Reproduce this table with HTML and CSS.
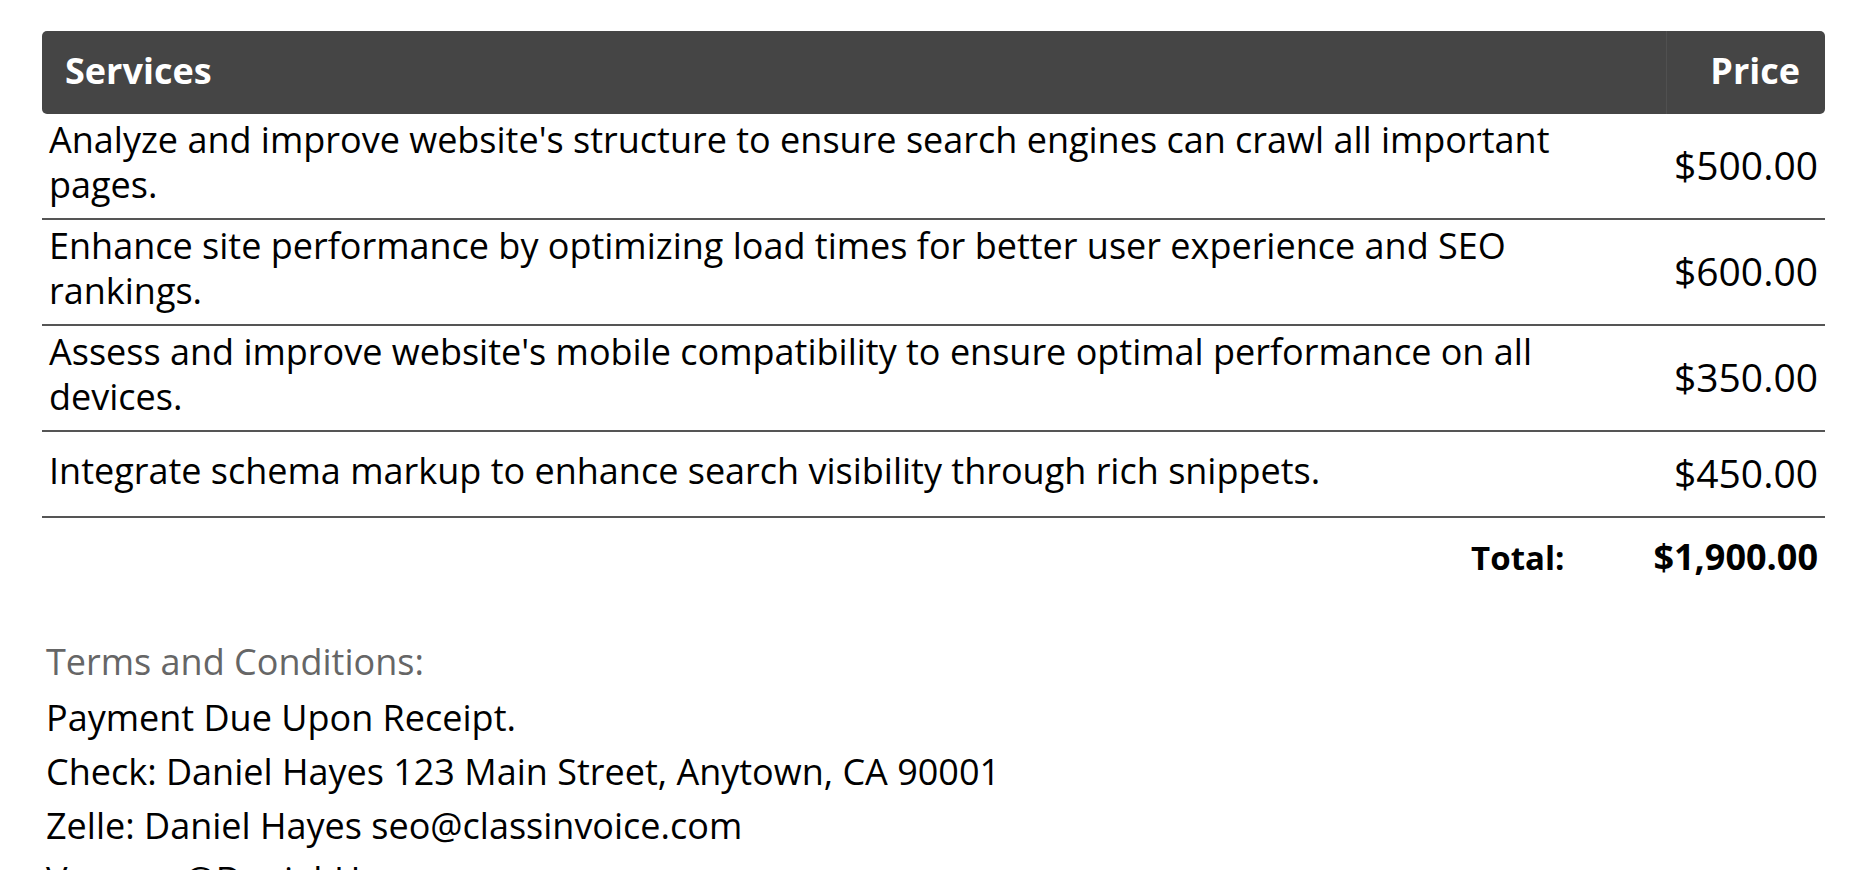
FILE: index.html
```html
<!DOCTYPE html>
<html lang="en">
<head>
<meta charset="utf-8">
<title>Invoice</title>
<link rel="stylesheet" href="styles.css">
</head>
<body>
<div class="invoice">
  <div class="services">
    <div class="thead">
      <div class="th th-svc">Services</div>
      <div class="th th-price">Price</div>
    </div>
    <div class="row">
      <div class="desc">Analyze and improve website's structure to ensure search engines can crawl all important pages.</div>
      <div class="price">$500.00</div>
    </div>
    <div class="row">
      <div class="desc">Enhance site performance by optimizing load times for better user experience and SEO rankings.</div>
      <div class="price">$600.00</div>
    </div>
    <div class="row">
      <div class="desc">Assess and improve website's mobile compatibility to ensure optimal performance on all devices.</div>
      <div class="price">$350.00</div>
    </div>
    <div class="row">
      <div class="desc">Integrate schema markup to enhance search visibility through rich snippets.</div>
      <div class="price">$450.00</div>
    </div>
  </div>
  <div class="total">
    <span class="total-label">Total:</span>
    <span class="total-value">$1,900.00</span>
  </div>
  <div class="terms">
    <p class="terms-title">Terms and Conditions:</p>
    <p class="terms-line">Payment Due Upon Receipt.</p>
    <p class="terms-line">Check: Daniel Hayes 123 Main Street, Anytown, CA 90001</p>
    <p class="terms-line">Zelle: Daniel Hayes seo@classinvoice.com</p>
    <p class="terms-line">Venmo: @Daniel-Hayes</p>
  </div>
</div>
</body>
</html>
```

FILE: styles.css
```css
* { box-sizing: border-box; }
html, body { margin: 0; padding: 0; background: #fff; }
body {
  font-family: "Open Sans", "Liberation Sans", sans-serif;
  color: #000;
  overflow: hidden;
  height: 870px;
}
.invoice {
  width: 1783px;
  margin: 31px 0 0 42px;
}
.thead {
  display: grid;
  grid-template-columns: 1fr 159px;
  background: #454545;
  border-radius: 5px;
  color: #fff;
  font-weight: 700;
  font-size: 36px;
  line-height: 45px;
}
.th { padding: 17px 23px 21px; }
.th-price {
  text-align: right;
  padding-right: 25px;
  border-left: 1px solid #505050;
}
.row {
  display: grid;
  grid-template-columns: 1fr 159px;
  border-bottom: 2px solid #555;
  font-size: 36px;
  line-height: 45px;
}
.desc {
  align-self: center;
  padding: 3px 40px 11px 7px;
}
.price {
  align-self: center;
  text-align: right;
  padding: 17.5px 7px 21.5px 0;
  font-size: 39px;
}
.total {
  display: flex;
  justify-content: flex-end;
  align-items: baseline;
  gap: 89px;
  padding: 16px 7px 0 0;
  font-weight: 700;
  line-height: 45px;
}
.total-label { font-size: 33px; }
.total-value { font-size: 36px; }
.terms {
  margin-top: 55px;
  padding-left: 4px;
  font-size: 36px;
  line-height: 54px;
}
.terms p { margin: 0; }
.terms-title {
  color: #666;
  margin-bottom: 2px !important;
}
```
